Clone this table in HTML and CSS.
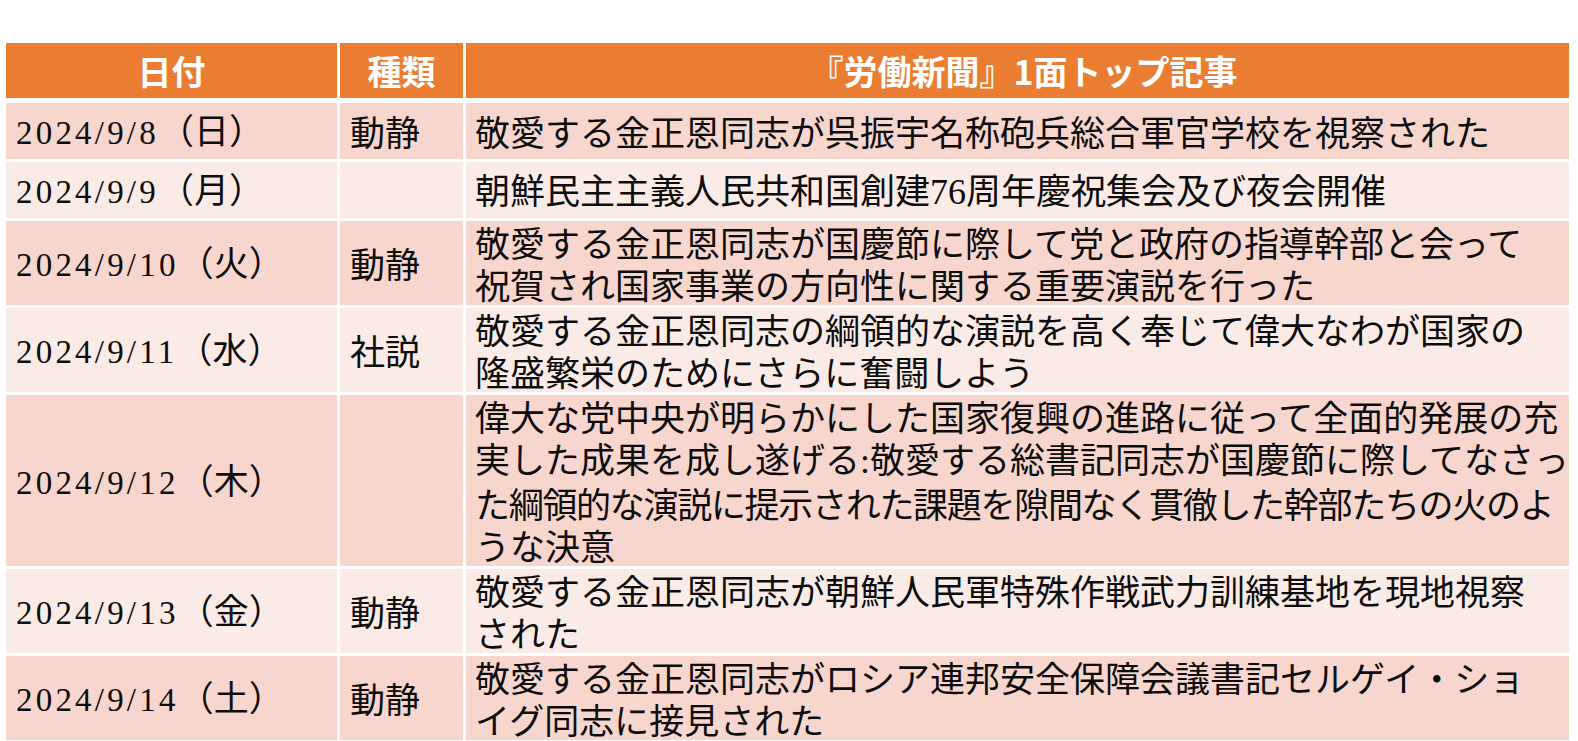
FILE: index.html
```html
<!DOCTYPE html>
<html lang="ja">
<head>
<meta charset="utf-8">
<title>労働新聞 1面トップ記事</title>
<link rel="stylesheet" href="styles.css">
</head>
<body>
<div class="table">
  <div class="row head">
    <div class="cell c1">日付</div>
    <div class="cell c2">種類</div>
    <div class="cell c3">『労働新聞』1面トップ記事</div>
  </div>
  <div class="row odd">
    <div class="cell date"><span class="in"><span class="num">2024/9/8</span>（日）</span></div>
    <div class="cell kind">動静</div>
    <div class="cell text"><p class="in">敬愛する金正恩同志が呉振宇名称砲兵総合軍官学校を視察された</p></div>
  </div>
  <div class="row even">
    <div class="cell date"><span class="in"><span class="num">2024/9/9</span>（月）</span></div>
    <div class="cell kind"></div>
    <div class="cell text"><p class="in">朝鮮民主主義人民共和国創建<span class="lat">76</span>周年慶祝集会及び夜会開催</p></div>
  </div>
  <div class="row odd">
    <div class="cell date"><span class="in"><span class="num">2024/9/10</span>（火）</span></div>
    <div class="cell kind">動静</div>
    <div class="cell text"><p class="in">敬愛する金正恩同志が国慶節に際して党と政府の指導幹部と会って<br>祝賀され国家事業の方向性に関する重要演説を行った</p></div>
  </div>
  <div class="row even">
    <div class="cell date"><span class="in"><span class="num">2024/9/11</span>（水）</span></div>
    <div class="cell kind">社説</div>
    <div class="cell text"><p class="in">敬愛する金正恩同志の綱領的な演説を高く奉じて偉大なわが国家の<br>隆盛繁栄のためにさらに奮闘しよう</p></div>
  </div>
  <div class="row odd tall">
    <div class="cell date"><span class="in"><span class="num">2024/9/12</span>（木）</span></div>
    <div class="cell kind"></div>
    <div class="cell text"><p class="in">偉大な党中央が明らかにした国家復興の進路に従って全面的発展の充<br>実した成果を成し遂げる<span class="lat">:</span>敬愛する総書記同志が国慶節に際してなさっ<br><span class="tight">た綱領的な演説に提示された課題を隙間なく貫徹した幹部たちの火のよ</span><br>うな決意</p></div>
  </div>
  <div class="row even">
    <div class="cell date"><span class="in"><span class="num">2024/9/13</span>（金）</span></div>
    <div class="cell kind">動静</div>
    <div class="cell text"><p class="in">敬愛する金正恩同志が朝鮮人民軍特殊作戦武力訓練基地を現地視察<br>された</p></div>
  </div>
  <div class="row odd">
    <div class="cell date"><span class="in"><span class="num">2024/9/14</span>（土）</span></div>
    <div class="cell kind">動静</div>
    <div class="cell text"><p class="in">敬愛する金正恩同志がロシア連邦安全保障会議書記セルゲイ・ショ<br>イグ同志に接見された</p></div>
  </div>
</div>
</body>
</html>
```

FILE: styles.css
```css
html, body {
  margin: 0;
  padding: 0;
  background: #ffffff;
}

body {
  font-family: "Noto Sans CJK JP", "Noto Sans", sans-serif;
  color: #0d0d0d;
}

.table {
  display: flex;
  flex-direction: column;
  gap: 3px;
  margin: 43px 0 0 6px;
  width: 1563px;
}

.row {
  display: grid;
  grid-template-columns: 331px 123px 1103px;
  column-gap: 3px;
  min-height: 56px;
}

.row.head {
  min-height: 55px;
  margin-bottom: 2px;
}

.row.tall {
  min-height: 170px;
}

.cell {
  display: flex;
  align-items: center;
  padding: 0 10px;
  font-size: 35px;
  line-height: 42px;
  white-space: nowrap;
}

.in {
  margin: 0;
}

.head .cell {
  background: #eb7d33;
  color: #ffffff;
  font-weight: 700;
  font-size: 34px;
  justify-content: center;
  padding: 0;
}

.head .c3 {
  padding-left: 12px;
}

.odd .cell {
  background: #f6d6cd;
}

.even .cell {
  background: #fbebe7;
}

.num {
  font-family: "Liberation Serif", serif;
  font-size: 33px;
  letter-spacing: 3.2px;
}

.lat {
  font-family: "Liberation Serif", serif;
  font-size: 36px;
}

.tight {
  letter-spacing: -1.3px;
}

.text {
  padding-left: 9px;
}
```
